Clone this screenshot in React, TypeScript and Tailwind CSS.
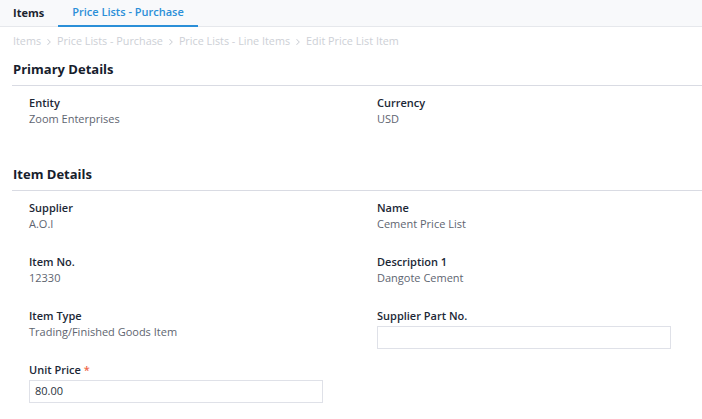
import { ChevronRight } from "lucide-react";

const crumbs = ["Items", "Price Lists - Purchase", "Price Lists - Line Items", "Edit Price List Item"];

function Field({ label, value }: { label: string; value: string }) {
  return (
    <div className="h-[54px]">
      <div className="text-[11px] font-semibold leading-[16px] text-[#1c2836]">{label}</div>
      <div className="text-[11px] leading-[16px] text-[#5e6570]">{value}</div>
    </div>
  );
}

function InputField({ label, value, required }: { label: string; value: string; required?: boolean }) {
  return (
    <div className="h-[54px]">
      <div className="flex items-center gap-[3px] text-[11px] font-semibold leading-[16px] text-[#1c2836]">
        {label}
        {required && <span className="text-[#f0674a]">*</span>}
      </div>
      <div className="mt-[2px] flex h-[23px] w-[294px] items-center border border-[#dfe1e8] px-[5px] text-[11px] text-[#2a3340]">
        {value}
      </div>
    </div>
  );
}

function Section({ title, children }: { title: string; children: React.ReactNode }) {
  return (
    <div>
      <div className="ml-[12px] border-b border-[#d9dbe3] pb-[7px] pl-[1px] text-[13px] font-bold leading-[18px] text-[#16202c]">
        {title}
      </div>
      <div className="grid grid-cols-[348px_1fr] pl-[29px] pt-[9px]">{children}</div>
    </div>
  );
}

export default function App() {
  return (
    <div className="h-[419px] w-[702px] overflow-hidden bg-white" style={{ fontFamily: '"Open Sans", sans-serif' }}>
      <div className="flex h-[27px] border-b border-[#e6e8ec] bg-[#f8f9fb] text-[11px]">
        <div className="flex items-center pl-[13px] pr-[14px] font-bold text-[#1c2430]">Items</div>
        <div className="-mb-px flex items-center border-b-2 border-[#2b8fd8] px-[14px] font-semibold text-[#2b8fd8]">
          Price Lists - Purchase
        </div>
      </div>
      <div className="flex h-[29px] items-center pl-[13px] text-[10.8px] text-[#cdd0d6]">
        {crumbs.map((c, i) => (
          <span key={c} className="flex items-center">
            {i > 0 && <ChevronRight className="mx-[3px] h-[10px] w-[10px]" strokeWidth={2.5} />}
            {c}
          </span>
        ))}
      </div>
      <div className="h-[4px]" />
      <Section title="Primary Details">
        <Field label="Entity" value="Zoom Enterprises" />
        <Field label="Currency" value="USD" />
      </Section>
      <div className="h-[16px]" />
      <Section title="Item Details">
        <Field label="Supplier" value="A.O.I" />
        <Field label="Name" value="Cement Price List" />
        <Field label="Item No." value="12330" />
        <Field label="Description 1" value="Dangote Cement" />
        <Field label="Item Type" value="Trading/Finished Goods Item" />
        <InputField label="Supplier Part No." value="" />
        <InputField label="Unit Price" value="80.00" required />
      </Section>
    </div>
  );
}
